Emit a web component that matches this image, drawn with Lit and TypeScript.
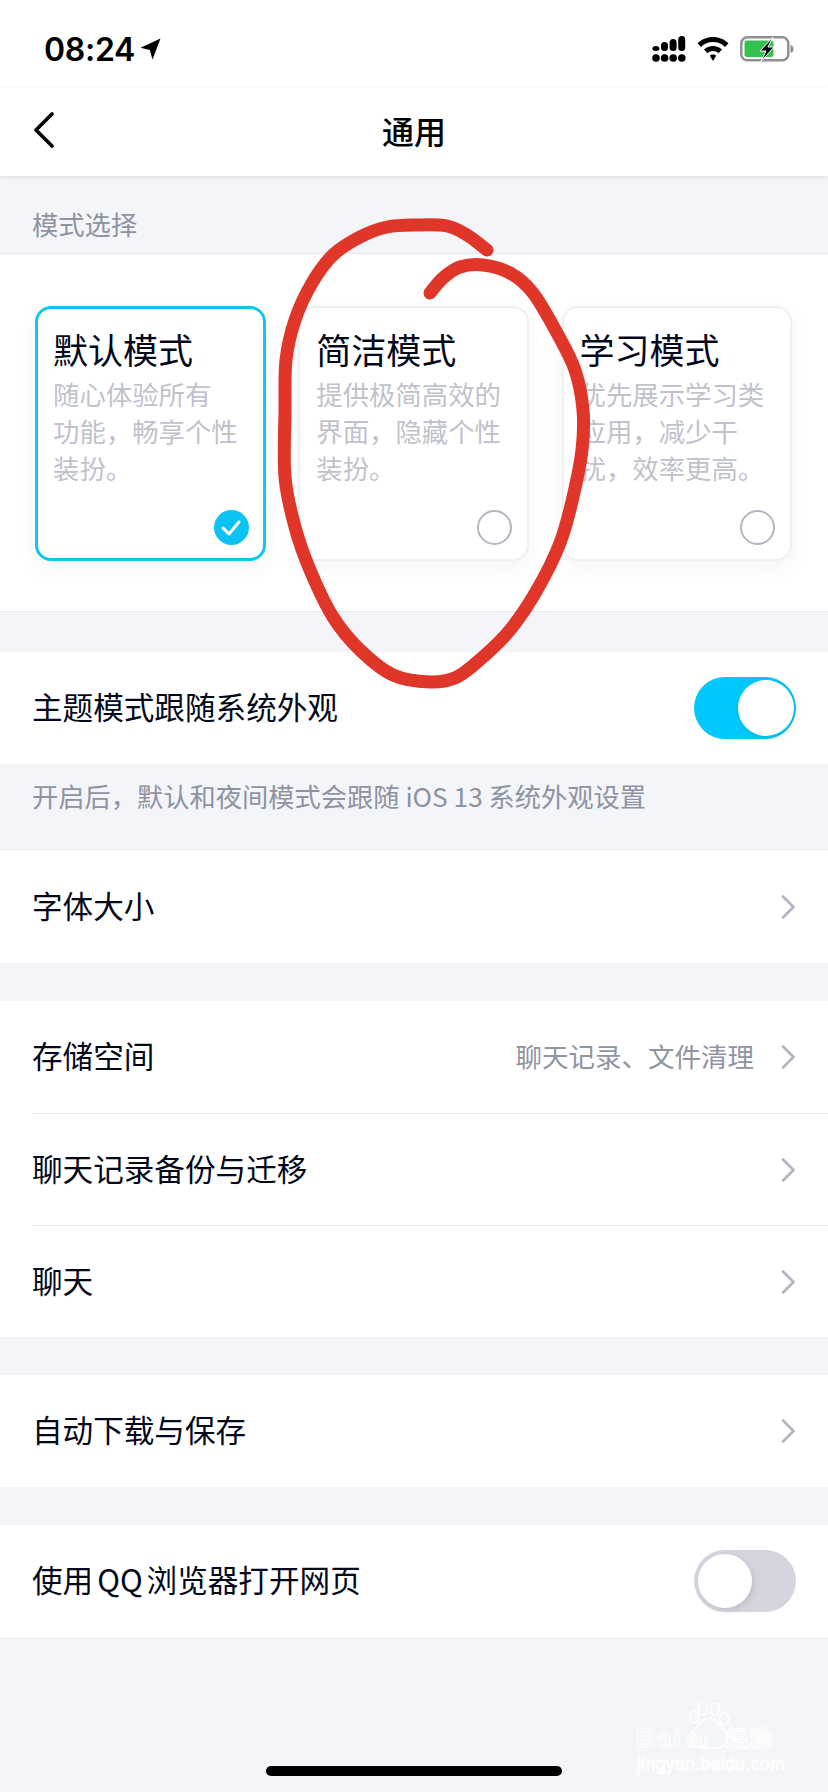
import { LitElement, html, css, svg } from 'lit';
import { customElement } from 'lit/decorators.js';

// the red marker stroke that was drawn over the screenshot, in page pixels
const MARK = [
  [487, 250], [467, 235], [447, 226], [417, 225], [387, 227], [360, 237], [333, 255], [312, 283],
  [295, 320], [286, 360], [285, 410], [285, 477], [295, 527], [310, 570], [333, 617], [360, 650],
  [393, 675], [430, 682], [457, 677], [483, 657], [510, 630], [537, 590], [560, 543], [573, 497],
  [582, 450], [583, 410], [575, 370], [557, 333], [533, 293], [510, 273], [483, 265], [460, 267],
  [443, 278], [430, 293],
];

function smooth(points: number[][]) {
  let d = `M${points[0][0]} ${points[0][1]}`;
  for (let i = 0; i < points.length - 1; i++) {
    const p0 = points[Math.max(i - 1, 0)];
    const p1 = points[i];
    const p2 = points[i + 1];
    const p3 = points[Math.min(i + 2, points.length - 1)];
    const c1x = p1[0] + (p2[0] - p0[0]) / 6;
    const c1y = p1[1] + (p2[1] - p0[1]) / 6;
    const c2x = p2[0] - (p3[0] - p1[0]) / 6;
    const c2y = p2[1] - (p3[1] - p1[1]) / 6;
    d += ` C${c1x} ${c1y} ${c2x} ${c2y} ${p2[0]} ${p2[1]}`;
  }
  return d;
}

const chevron = html`<svg class="chev" width="15" height="24" viewBox="0 0 15 24">
  <path d="M2 1.5 L12.5 12 L2 22.5" fill="none" stroke="#b1b4c0" stroke-width="2.6" stroke-linecap="round" stroke-linejoin="round"/>
</svg>`;

@customElement('app-root')
export class AppRoot extends LitElement {
  static styles = css`
    :host {
      display: block;
      font-family: "Noto Sans CJK SC", "Liberation Sans", sans-serif;
      color: #03081a;
    }
    .page {
      position: relative;
      width: 828px;
      height: 1792px;
      overflow: hidden;
      background: #f4f5f9;
      display: flex;
      flex-direction: column;
    }
    .status {
      height: 88px;
      background: #fff;
      display: flex;
      align-items: center;
      justify-content: space-between;
      padding: 10px 34px 0 44px;
      box-sizing: border-box;
    }
    .time {
      display: flex;
      align-items: center;
      gap: 5px;
      font-family: Inter, "Liberation Sans", sans-serif;
      font-weight: 600;
      font-size: 32px;
      letter-spacing: -0.3px;
      color: #000;
    }
    .status-icons {
      display: flex;
      align-items: center;
      gap: 11px;
    }
    .nav {
      position: relative;
      height: 88px;
      box-sizing: border-box;
      padding-bottom: 4px;
      background: #fff;
      display: flex;
      align-items: center;
      justify-content: center;
      box-shadow: 0 1px 4px rgba(20, 30, 60, 0.1);
      z-index: 1;
    }
    .back {
      position: absolute;
      left: 33px;
      top: 24px;
    }
    .nav-title {
      font-size: 32px;
      font-weight: 500;
      line-height: 44px;
      color: #000;
    }
    .label {
      height: 78px;
      box-sizing: border-box;
      padding: 30px 32px 0;
      font-size: 26.300px;
      line-height: 36px;
      color: #8d93a1;
      border-bottom: 1px solid #e8e9ee;
    }
    .cards {
      height: 358px;
      box-sizing: border-box;
      padding: 52px 36px 0 35px;
      background: #fff;
      display: flex;
      justify-content: space-between;
      border-bottom: 1px solid #e8e9ee;
    }
    .card {
      width: 230.500px;
      height: 255px;
      box-sizing: border-box;
      padding: 19px 15px 14px 16px;
      border: 2px solid #eef0f4;
      border-radius: 16px;
      background: #fff;
      box-shadow: 0 8px 18px rgba(40, 50, 90, 0.05);
      display: flex;
      flex-direction: column;
    }
    .card.on {
      border: 3px solid #12c5ee;
      padding: 18px 14px 13px 15px;
    }
    .card-title {
      font-size: 35px;
      line-height: 44px;
      white-space: nowrap;
    }
    .card-desc {
      margin-top: 4px;
      font-size: 26.400px;
      line-height: 37px;
      color: #bfc2cc;
      white-space: nowrap;
    }
    .mark {
      margin-top: auto;
      align-self: flex-end;
      width: 35px;
      height: 35px;
      box-sizing: border-box;
      border-radius: 50%;
      border: 2px solid #b4b6c1;
    }
    .mark.on {
      border: none;
      background: #0cc3f3;
      display: flex;
      align-items: center;
      justify-content: center;
    }
    .gap {
      height: 38px;
    }
    .gap.wide {
      height: 40px;
    }
    .group {
      background: #fff;
    }
    .row {
      height: 112px;
      box-sizing: border-box;
      margin-left: 32px;
      padding-right: 32px;
      display: flex;
      align-items: center;
      font-size: 30.600px;
    }
    .row + .row {
      border-top: 1px solid #eaebef;
    }
    .row-name {
      flex: 1;
      margin-top: -4px;
    }
    .row-extra {
      font-size: 26.500px;
      color: #8f94a3;
      margin: -4px 27px 0 0;
    }
    .latin {
      margin: 0 4px;
    }
    .note {
      height: 87px;
      box-sizing: border-box;
      padding: 14px 32px 0;
      font-size: 26.250px;
      line-height: 36px;
      color: #8d93a1;
    }
    .toggle {
      width: 102px;
      height: 62px;
      box-sizing: border-box;
      padding: 4px;
      border-radius: 31px;
      background: #d4d5de;
      display: flex;
    }
    .toggle.on {
      background: #00c8fb;
      justify-content: flex-end;
      padding: 3px 2px;
    }
    .knob {
      width: 54px;
      height: 54px;
      border-radius: 50%;
      background: #fff;
      box-shadow: 2px 2px 6px rgba(60, 60, 90, 0.15);
    }
    .toggle.on .knob {
      width: 56px;
      height: 56px;
    }
    .foot {
      flex: 1;
      display: flex;
      align-items: flex-end;
      justify-content: center;
      padding-bottom: 16px;
    }
    .home {
      width: 296px;
      height: 10px;
      border-radius: 5px;
      background: #000;
    }
    .annotation {
      position: absolute;
      left: 0;
      top: 0;
      z-index: 2;
      pointer-events: none;
    }
    .watermark {
      position: absolute;
      left: 636px;
      top: 1703px;
      width: 150px;
      height: 70px;
      color: #f4f5f9;
      -webkit-text-stroke: 1px #fff;
      font-family: "Liberation Sans", sans-serif;
    }
    .wm-line {
      display: flex;
      align-items: baseline;
      position: absolute;
      left: 0;
      top: 19px;
      font-size: 26px;
      line-height: 30px;
      font-weight: 700;
      letter-spacing: 2px;
    }
    .wm-du {
      margin-left: 4px;
      font-size: 18px;
      letter-spacing: 0;
    }
    .wm-cn {
      font-family: "Noto Sans CJK SC", sans-serif;
      font-size: 23px;
      letter-spacing: 1px;
      margin-left: 17px;
    }
    .wm-url {
      position: absolute;
      left: 1px;
      top: 51px;
      font-size: 17.500px;
      line-height: 20px;
      letter-spacing: 0.4px;
      white-space: nowrap;
    }
    .wm-paw {
      position: absolute;
      left: 50px;
      top: 0;
    }
  `;

  private card(title: string, desc: string[], on = false) {
    return html`<div class="card ${on ? 'on' : ''}">
      <div class="card-title">${title}</div>
      <div class="card-desc">${desc.map((line) => html`<div>${line}</div>`)}</div>
      ${on
        ? html`<div class="mark on">
            <svg width="22" height="18" viewBox="0 0 22 18">
              <path d="M3 9 L9 15 L19 3" fill="none" stroke="#fff" stroke-width="3" stroke-linecap="round" stroke-linejoin="round"/>
            </svg>
          </div>`
        : html`<div class="mark"></div>`}
    </div>`;
  }

  private statusIcons() {
    const dots = [0, 1, 2, 3].map((i) => svg`<circle cx=${4 + i * 8.6} cy="22" r="3.8"/>`);
    const bars = [
      [0, 10, 7],
      [8.6, 6, 7],
      [17.2, 3, 7],
      [25.8, 0, 7],
    ].map(([x, y, w]) => svg`<rect x=${x + 0.4} y=${y} width=${w} height=${15 - y} rx="3.5"/>`);
    return html`<div class="status-icons">
      <svg width="34" height="27" viewBox="0 0 34 27" fill="#000">${bars}${dots}</svg>
      <svg width="32" height="24" viewBox="0 0 32 24" fill="#000">
        <path d="M16 0 C22 0 27.500 2.300 31.500 6.300 L28 10 C25 7 20.700 5.100 16 5.100 C11.300 5.100 7 7 4 10 L0.500 6.300 C4.500 2.300 10 0 16 0 Z"/>
        <path d="M16 9 C19.500 9 22.600 10.300 25 12.600 L21.500 16.200 C20 14.800 18.100 14 16 14 C13.900 14 12 14.800 10.500 16.200 L7 12.600 C9.400 10.300 12.500 9 16 9 Z"/>
        <path d="M16 17.500 C17.300 17.500 18.400 18 19.200 18.800 L16 24 L12.800 18.800 C13.600 18 14.700 17.500 16 17.500 Z"/>
      </svg>
      <svg width="54" height="26" viewBox="0 0 54 26">
        <rect x="1.300" y="1.300" width="47" height="23" rx="6" fill="#fff" stroke="#8f8f8f" stroke-width="2.400"/>
        <rect x="4.500" y="4.500" width="29" height="16.500" rx="2.500" fill="#34c24f"/>
        <path d="M50.500 9 C52.500 9.500 53.500 11 53.500 13 C53.500 15 52.500 16.500 50.500 17 Z" fill="#8f8f8f"/>
        <path d="M33 1 L20 15 L26 15 L21 25.500 L34 11 L28 11 Z" fill="#000" stroke="#fff" stroke-width="1"/>
      </svg>
    </div>`;
  }

  render() {
    return html`<div class="page">
      <div class="status">
        <div class="time">
          <span>08:24</span>
          <svg width="21" height="22" viewBox="0 0 21 22">
            <path d="M20.500 0.500 L12.500 21.500 L9.800 12 L0.500 9.800 Z" fill="#000"/>
          </svg>
        </div>
        ${this.statusIcons()}
      </div>

      <div class="nav">
        <svg class="back" width="22" height="36" viewBox="0 0 22 36">
          <path d="M19 2 L3 18 L19 34" fill="none" stroke="#000" stroke-width="3.600" stroke-linecap="round" stroke-linejoin="round"/>
        </svg>
        <div class="nav-title">通用</div>
      </div>

      <div class="label">模式选择</div>
      <div class="cards">
        ${this.card('默认模式', ['随心体验所有', '功能，畅享个性', '装扮。'], true)}
        ${this.card('简洁模式', ['提供极简高效的', '界面，隐藏个性', '装扮。'])}
        ${this.card('学习模式', ['优先展示学习类', '应用，减少干', '扰，效率更高。'])}
      </div>
      <div class="gap wide"></div>

      <div class="group">
        <div class="row">
          <span class="row-name">主题模式跟随系统外观</span>
          <div class="toggle on"><div class="knob"></div></div>
        </div>
      </div>
      <div class="note">开启后，默认和夜间模式会跟随 iOS 13 系统外观设置</div>

      <div class="group">
        <div class="row"><span class="row-name">字体大小</span>${chevron}</div>
      </div>
      <div class="gap"></div>

      <div class="group">
        <div class="row">
          <span class="row-name">存储空间</span>
          <span class="row-extra">聊天记录、文件清理</span>
          ${chevron}
        </div>
        <div class="row"><span class="row-name">聊天记录备份与迁移</span>${chevron}</div>
        <div class="row"><span class="row-name">聊天</span>${chevron}</div>
      </div>
      <div class="gap"></div>

      <div class="group">
        <div class="row"><span class="row-name">自动下载与保存</span>${chevron}</div>
      </div>
      <div class="gap"></div>

      <div class="group">
        <div class="row">
          <span class="row-name">使用<span class="latin">QQ</span>浏览器打开网页</span>
          <div class="toggle"><div class="knob"></div></div>
        </div>
      </div>

      <div class="foot"><div class="home"></div></div>

      <div class="watermark">
        <svg class="wm-paw" width="46" height="46" viewBox="0 0 46 46" fill="none" stroke="#fff" stroke-width="1.500">
          <ellipse cx="8" cy="14" rx="4.500" ry="6"/>
          <ellipse cx="17" cy="6" rx="4.500" ry="6"/>
          <ellipse cx="29" cy="6" rx="4.500" ry="6"/>
          <ellipse cx="38" cy="16" rx="4.500" ry="6"/>
          <path d="M23 15 C30 15 33 22 39 28 C45 36 39 45 31 45 L15 45 C6 45 1 36 7 28 C13 22 16 15 23 15 Z"/>
        </svg>
        <div class="wm-line"><span>Bai</span><span class="wm-du">du</span><span class="wm-cn">经验</span></div>
        <div class="wm-url">jingyan.baidu.com</div>
      </div>

      <svg class="annotation" width="828" height="1792" viewBox="0 0 828 1792">
        <path d=${smooth(MARK)} fill="none" stroke="#e0362a" stroke-width="13" stroke-linecap="round" stroke-linejoin="round"/>
      </svg>
    </div>`;
  }
}
